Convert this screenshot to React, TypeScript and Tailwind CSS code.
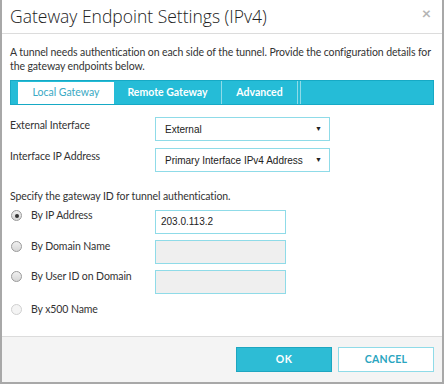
import React from "react";

function Radio({ checked, disabled }: { checked?: boolean; disabled?: boolean }) {
  return (
    <span
      className={`relative inline-block w-[11px] h-[11px] rounded-full border ${
        disabled ? "border-[#d0d0d0] bg-[#f4f4f4]" : "border-[#9a9a9a] bg-gradient-to-b from-[#f0f0f0] to-[#d6d6d6]"
      }`}
    >
      {checked && <span className="absolute left-[2.5px] top-[2.5px] w-[4px] h-[4px] rounded-full bg-[#333]" />}
    </span>
  );
}

function Select({ value }: { value: string }) {
  return (
    <div className="w-[175px] h-[24px] border border-[#8fdbe8] bg-white flex items-center justify-between pl-[9px] pr-[7px] text-[10px] text-[#222] whitespace-nowrap" style={{ fontFamily: '"Liberation Sans", Arial, sans-serif' }}>
      <span>{value}</span>
      <span className="text-[7px] text-[#222]">▼</span>
    </div>
  );
}

function TextInput({ value, disabled }: { value?: string; disabled?: boolean }) {
  return (
    <div
      className={`w-[131px] h-[24px] border border-[#8fdbe8] flex items-center pl-[5px] text-[10px] text-[#222] ${disabled ? "bg-[#efefef]" : "bg-white"}`}
      style={{ fontFamily: '"Liberation Sans", Arial, sans-serif' }}
    >
      {value}
    </div>
  );
}

const label = "text-[10.5px] tracking-[-0.1px] text-[#333]";

export default function App() {
  return (
    <div className="w-[444px] h-[384px] bg-white" style={{ fontFamily: 'Lato, "Open Sans", sans-serif' }}>
      <div className="w-[444px] h-[384px] border-l-[2px] border-r-[2px] border-b-[2px] border-[#a8a8a8] flex flex-col">
        <div className="h-[34px] border-b border-[#dcdcdc] flex items-center justify-between pl-[8px] pr-[11px]">
          <span className="text-[17.5px] font-light text-[#222]" style={{ fontFamily: '"Open Sans", sans-serif' }}>
            Gateway Endpoint Settings (IPv4)
          </span>
          <span className="text-[16px] text-[#b4b4b4] leading-none -mt-[8px] font-bold">×</span>
        </div>
        <div className="flex-1 pl-[8px] pr-[8px]">
          <p className={`mt-[11px] leading-[14px] ${label}`}>
            A tunnel needs authentication on each side of the tunnel. Provide the configuration details for the gateway endpoints below.
          </p>
          <div className="mt-[7px] h-[25px] flex bg-[#25bcd7] border border-[#16a9c5]">
            <div className="w-[7px]" />
            <div className="w-[96px] mt-[1px] bg-white flex items-center justify-center text-[10.5px] text-[#3aa9c4]">Local Gateway</div>
            <div className="w-[108px] border-r border-[#8fdbe8] flex items-center justify-center text-[10.5px] font-bold text-white">Remote Gateway</div>
            <div className="w-[76px] border-r border-[#8fdbe8] flex items-center justify-center text-[10.5px] font-bold text-white">Advanced</div>
            <div className="flex-1 border-l border-[#8fdbe8] ml-[2px]" />
          </div>
          <div className="mt-[12px] flex items-start">
            <span className={`w-[145px] pt-[1px] ${label}`}>External Interface</span>
            <Select value="External" />
          </div>
          <div className="mt-[7px] flex items-start">
            <span className={`w-[145px] pt-[1px] ${label}`}>Interface IP Address</span>
            <Select value="Primary Interface IPv4 Address" />
          </div>
          <p className={`mt-[17px] ${label}`}>Specify the gateway ID for tunnel authentication.</p>
          <div className="mt-[1px] flex items-start">
            <div className="w-[145px] flex items-center gap-[9px] pl-[1px] pt-[2px]">
              <Radio checked />
              <span className={label}>By IP Address</span>
            </div>
            <div className="mt-[4px]"><TextInput value="203.0.113.2" /></div>
          </div>
          <div className="mt-[3px] flex items-start">
            <div className="w-[145px] flex items-center gap-[9px] pl-[1px] pt-[2px]">
              <Radio />
              <span className={label}>By Domain Name</span>
            </div>
            <div className="mt-[3px]"><TextInput disabled /></div>
          </div>
          <div className="mt-[3px] flex items-start">
            <div className="w-[145px] flex items-center gap-[9px] pl-[1px] pt-[2px]">
              <Radio />
              <span className={label}>By User ID on Domain</span>
            </div>
            <div className="mt-[3px]"><TextInput disabled /></div>
          </div>
          <div className="mt-[8px] flex items-center gap-[9px] pl-[1px]">
            <Radio disabled />
            <span className={label}>By x500 Name</span>
          </div>
        </div>
        <div className="h-[46px] border-t border-[#dcdcdc] bg-[#f4f4f4] flex items-center justify-end gap-[6px] pr-[8px]">
          <div className="w-[96px] h-[25px] bg-[#2dbcd5] border border-[#1ea6c0] flex items-center justify-center text-[10.5px] font-bold text-white tracking-[0.3px]">OK</div>
          <div className="w-[96px] h-[25px] bg-white border border-[#8fdbe8] flex items-center justify-center text-[10.5px] font-bold text-[#2aa5c0] tracking-[0.3px]">CANCEL</div>
        </div>
      </div>
    </div>
  );
}
